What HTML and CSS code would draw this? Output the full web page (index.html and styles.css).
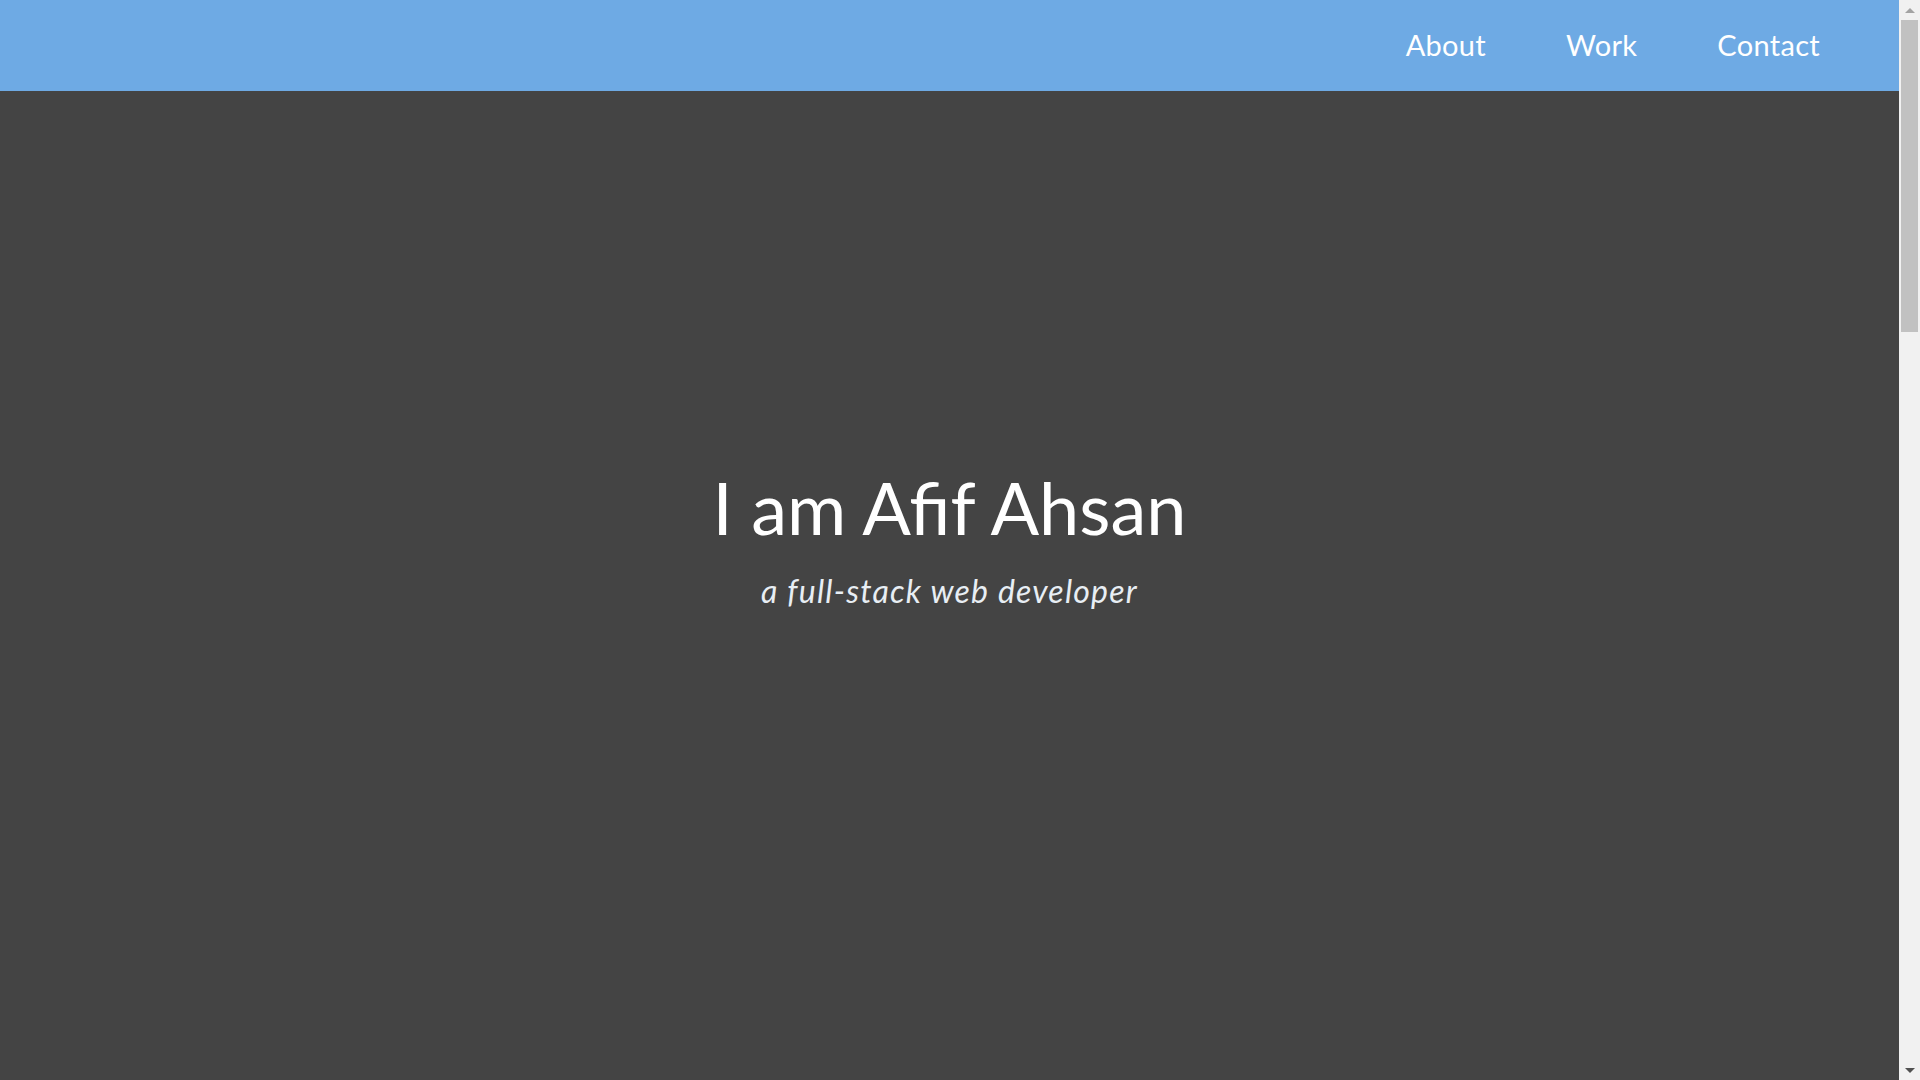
FILE: index.html
```html
<!DOCTYPE html>
<html lang="en">
<head>
<meta charset="utf-8">
<title>Afif Ahsan</title>
<link rel="stylesheet" href="styles.css">
</head>
<body>
<header class="nav">
  <nav class="nav-links">
    <a href="#about" class="nav-link">About</a>
    <a href="#work" class="nav-link">Work</a>
    <a href="#contact" class="nav-link">Contact</a>
  </nav>
</header>
<div class="scrollbar" aria-hidden="true">
  <span class="sb-arrow sb-up"></span>
  <span class="sb-track"><span class="sb-thumb"></span></span>
  <span class="sb-arrow sb-down"></span>
</div>
<main class="page">
  <section class="hero">
    <h1 class="hero-title">I am Afif Ahsan</h1>
    <p class="hero-sub">a full-stack web developer</p>
  </section>
  <section id="about" class="page-section"></section>
  <section id="work" class="page-section"></section>
  <section id="contact" class="page-section"></section>
</main>
</body>
</html>
```
FILE: styles.css
```css
* { box-sizing: border-box; }
html, body { margin: 0; padding: 0; }
body {
  background: #444444;
  font-family: Lato, "Open Sans", sans-serif;
  color: #ffffff;
}
.nav {
  position: fixed;
  top: 0;
  left: 0;
  right: 21px;
  height: 91px;
  background: #6eaae4;
  display: flex;
  justify-content: flex-end;
  align-items: center;
  padding-right: 79px;
  z-index: 10;
}
.nav-links {
  display: flex;
  gap: 80px;
  padding-bottom: 2px;
}
.nav-link {
  color: #ffffff;
  text-decoration: none;
  font-size: 29px;
  font-weight: 400;
  letter-spacing: 0.3px;
}
.page {
  margin-right: 21px;
}
.hero {
  height: 100vh;
  display: flex;
  flex-direction: column;
  align-items: center;
  justify-content: center;
  padding-bottom: 6px;
}
.hero-title {
  margin: 0;
  font-size: 72px;
  font-weight: 400;
  line-height: 1.2;
}
.hero-sub {
  margin: 21px 0 0;
  font-size: 32px;
  font-style: italic;
  font-weight: 400;
  letter-spacing: 1.2px;
  color: #e8eef4;
}
.page-section {
  height: 840px;
}
.scrollbar {
  position: fixed;
  top: 0;
  right: 0;
  width: 21px;
  height: 100vh;
  background: #f1f1f1;
  display: flex;
  flex-direction: column;
  z-index: 20;
}
.sb-arrow {
  height: 20px;
  display: flex;
  align-items: center;
  justify-content: center;
}
.sb-up::before {
  content: "";
  border-left: 5px solid transparent;
  border-right: 5px solid transparent;
  border-bottom: 5px solid #a3a3a3;
}
.sb-down::before {
  content: "";
  border-left: 5px solid transparent;
  border-right: 5px solid transparent;
  border-top: 5px solid #505050;
}
.sb-track {
  flex: 1;
  padding: 0 2px 0 2px;
}
.sb-thumb {
  display: block;
  height: 312px;
  background: #c1c1c1;
}
```
